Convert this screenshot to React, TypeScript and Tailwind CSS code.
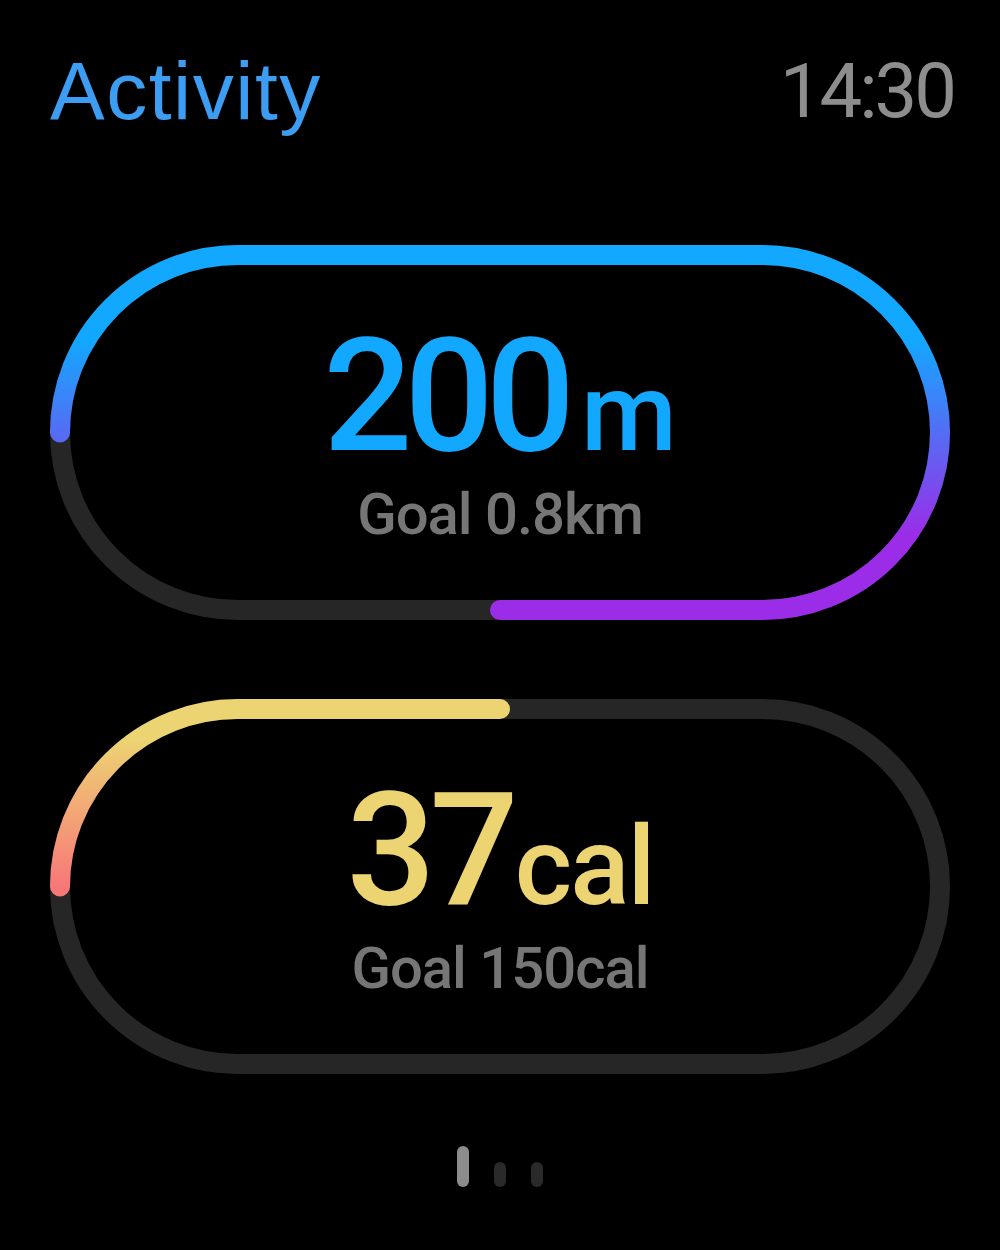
import React from 'react';

interface RingProps {
  id: string;
  progressPath: string;
  stops: { offset: string; color: string }[];
  y1: number;
  y2: number;
}

// stadium centreline: x 10..890, y 10..365, r 177.5
const TRACK_W = 20;

function StadiumRing({ id, progressPath, stops, y1, y2 }: RingProps) {
  return (
    <svg className="absolute inset-0" width="900" height="375" viewBox="0 0 900 375" fill="none">
      <defs>
        <linearGradient id={id} gradientUnits="userSpaceOnUse" x1="0" y1={y1} x2="0" y2={y2}>
          {stops.map((s) => (
            <stop key={s.offset} offset={s.offset} stopColor={s.color} />
          ))}
        </linearGradient>
      </defs>
      <rect x="10" y="10" width="880" height="355" rx="177.5" stroke="#262626" strokeWidth={TRACK_W} />
      <path d={progressPath} stroke={`url(#${id})`} strokeWidth={TRACK_W} strokeLinecap="round" />
    </svg>
  );
}

export default function App() {
  return (
    <div
      className="w-[1000px] h-[1250px] bg-black flex flex-col overflow-hidden"
      style={{ fontFamily: 'Roboto, "Noto Sans", sans-serif' }}
    >
      {/* Header */}
      <div className="flex items-start justify-between px-[50px] pt-[50px] h-[245px]">
        <span
          className="text-[#3c9df2] text-[82px] leading-none tracking-[1.5px]"
          style={{ fontFamily: '"Liberation Sans", Arial, sans-serif' }}
        >
          Activity
        </span>
        <span className="text-[#8d8d8d] text-[76px] leading-none tracking-[-3px] pt-[3px] mr-[-4px]">14:30</span>
      </div>

      {/* Distance */}
      <div className="relative mx-[50px] w-[900px] h-[375px] shrink-0">
        <StadiumRing
          id="distGrad"
          y1={95}
          y2={290}
          stops={[
            { offset: '0', color: '#12a8ff' },
            { offset: '1', color: '#9b2de8' },
          ]}
          progressPath="M 10 187.5 A 177.5 177.5 0 0 1 187.5 10 L 712.5 10 A 177.5 177.5 0 0 1 712.5 365 L 450 365"
        />
        <div className="relative h-full flex flex-col items-center justify-center">
          <div className="flex items-baseline text-[#12a8ff] font-medium">
            <span className="text-[157px] leading-[150px] tracking-[-8px]">200</span>
            <span className="text-[110px] leading-[150px] ml-[14px]">m</span>
          </div>
          <span className="text-[#767676] text-[58px] leading-[60px] font-medium tracking-[-1px] mt-[-4px]">
            Goal 0.8km
          </span>
        </div>
      </div>

      <div className="h-[79px] shrink-0" />

      {/* Calories */}
      <div className="relative mx-[50px] w-[900px] h-[375px] shrink-0">
        <StadiumRing
          id="calGrad"
          y1={40}
          y2={187.5}
          stops={[
            { offset: '0', color: '#ecd473' },
            { offset: '1', color: '#f87878' },
          ]}
          progressPath="M 10 187.5 A 177.5 177.5 0 0 1 187.5 10 L 450 10"
        />
        <div className="relative h-full flex flex-col items-center justify-center">
          <div className="flex items-baseline text-[#ecd473] font-medium">
            <span className="text-[157px] leading-[150px] tracking-[-6px]">37</span>
            <span className="text-[110px] leading-[150px] ml-[2px] tracking-[-2px]">cal</span>
          </div>
          <span className="text-[#767676] text-[58px] leading-[60px] font-medium tracking-[-1px] mt-[-4px]">
            Goal 150cal
          </span>
        </div>
      </div>

      {/* Page dots */}
      <div className="flex items-end justify-center gap-[25px] mt-[72px] h-[41px]">
        <div className="w-[12px] h-[41px] rounded-full bg-[#8c8c8c]" />
        <div className="w-[12px] h-[25px] rounded-full bg-[#2a2a2a]" />
        <div className="w-[12px] h-[25px] rounded-full bg-[#2a2a2a]" />
      </div>
    </div>
  );
}
